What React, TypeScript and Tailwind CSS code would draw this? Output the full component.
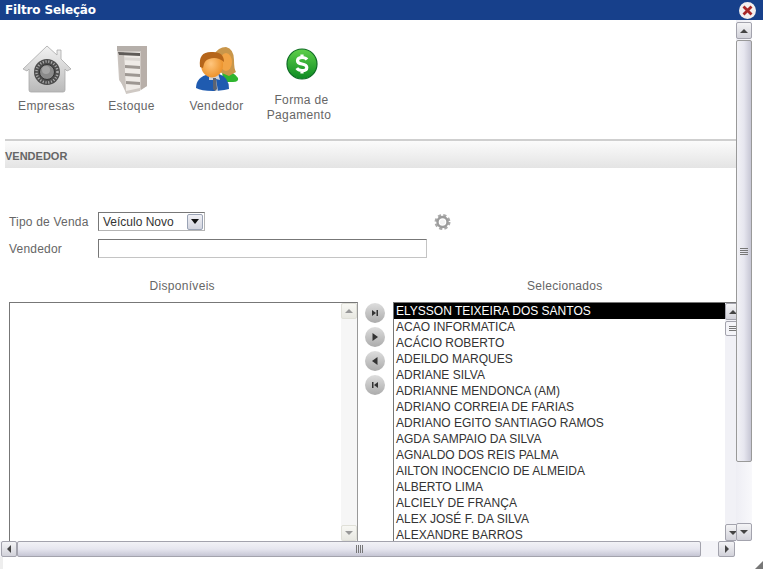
import React from "react";

const names = [
  "ELYSSON TEIXEIRA DOS SANTOS",
  "ACAO INFORMATICA",
  "ACÁCIO ROBERTO",
  "ADEILDO MARQUES",
  "ADRIANE SILVA",
  "ADRIANNE MENDONCA (AM)",
  "ADRIANO CORREIA DE FARIAS",
  "ADRIANO EGITO SANTIAGO RAMOS",
  "AGDA SAMPAIO DA SILVA",
  "AGNALDO DOS REIS PALMA",
  "AILTON INOCENCIO DE ALMEIDA",
  "ALBERTO LIMA",
  "ALCIELY DE FRANÇA",
  "ALEX JOSÉ F. DA SILVA",
  "ALEXANDRE BARROS",
];

const SafeIcon = () => (
  <svg width="50" height="50" viewBox="0 0 50 50">
    <defs>
      <linearGradient id="house" x1="0" y1="0" x2="0" y2="1">
        <stop offset="0" stopColor="#f2f2f2" />
        <stop offset="1" stopColor="#b9b9b9" />
      </linearGradient>
    </defs>
    <path
      d="M25 1 L35 10 V5 H39 V14 L49 24 L45 26 L43 24 V45 Q43 47 41 47 H9 Q7 47 7 45 V24 L5 26 L1 24 Z"
      fill="url(#house)"
      stroke="#a8a8a8"
      strokeWidth="0.8"
    />
    <circle cx="25" cy="27" r="13" fill="#4c4c4c" />
    <circle cx="25" cy="27" r="10.5" fill="none" stroke="#aaa" strokeWidth="2.5" strokeDasharray="1.2 1.6" />
    <circle cx="25" cy="27" r="7.5" fill="#8a8a8a" stroke="#333" />
    <circle cx="24" cy="25" r="4" fill="#a5a5a5" />
  </svg>
);

const CabinetIcon = () => (
  <svg width="32" height="50" viewBox="0 0 32 50">
    <path d="M1 1 H31 V41 L25 44 L24 46 L10 49 L9 43 L3 35 Z" fill="#cfc9c4" />
    <path d="M25 1 H31 V41 L25 45 Z" fill="#b8afa9" />
    <path d="M1 1 H25 V6 H1 Z" fill="#b5afaa" />
    <path d="M8 7 H24 V43 L10 46 Z" fill="#efebe7" />
    <path d="M2 7 L24 8 V11 L3 10 Z" fill="#5f5b58" />
    <path d="M3 12 L24 13 V16 L5 15 Z" fill="#dcd8d4" />
    <path d="M9 20 L24 21 V24 L9 23 Z M9 28 L24 29 V32 L9 31 Z M10 36 L24 37 V40 L10 39 Z" fill="#9d9792" />
    <path d="M2 10 L8 11 L10 48 L4 35 Z" fill="#c8c2bd" />
  </svg>
);

const PeopleIcon = () => (
  <svg width="44" height="46" viewBox="0 0 44 46">
    <defs>
      <radialGradient id="skin" cx="0.45" cy="0.45" r="0.65">
        <stop offset="0" stopColor="#ffc67e" />
        <stop offset="1" stopColor="#e98a1e" />
      </radialGradient>
    </defs>
    <path d="M27 23 Q36 22 43 31 Q44 35 38 35 L28 35 Z" fill="#2fb52f" />
    <path d="M19 8 Q23 0 31 0 Q39 2 39 13 Q39 22 41 25 L34 29 L22 24 Z" fill="#c9964a" />
    <ellipse cx="31" cy="15" rx="6" ry="9" fill="#f2a446" />
    <path d="M1 41 Q1 30 14 27 L24 27 Q34 30 34 42 Q24 44 18 44 Q6 44 1 41 Z" fill="#1f5bb0" />
    <path d="M14 26 L18 30 L23 26 L25 33 L21 32 L23 44 L20 44 L18 33 L14 33 Z" fill="#cfd4dc" />
    <path d="M18 31 L21 31 L22 42 L20 44 L18 42 Z" fill="#5d6472" />
    <ellipse cx="17" cy="18" rx="11" ry="12.5" fill="url(#skin)" />
    <path d="M5 20 Q3 5 16 5 Q29 4 29 15 Q22 9 14 12 Q9 13 8 21 Z" fill="#b5651a" />
  </svg>
);

const MoneyIcon = () => (
  <svg width="32" height="32" viewBox="0 0 32 32">
    <defs>
      <linearGradient id="coin" x1="0" y1="0" x2="0" y2="1">
        <stop offset="0" stopColor="#5fd04a" />
        <stop offset="1" stopColor="#0c8a22" />
      </linearGradient>
    </defs>
    <circle cx="16" cy="16" r="15" fill="url(#coin)" stroke="#0e6b24" strokeWidth="1.2" />
    <path
      d="M21 11.5 Q19.5 9.5 16 9.5 Q11.5 9.5 11.5 12.7 Q11.5 15.2 16 16 Q20.8 16.9 20.8 19.4 Q20.8 22.5 16 22.5 Q12.3 22.5 10.8 20.2 M16 6.5 V9.5 M16 22.5 V25.5"
      fill="none"
      stroke="#fff"
      strokeWidth="3.2"
    />
  </svg>
);

const GearIcon = () => (
  <svg width="17" height="18" viewBox="0 0 17 18">
    <circle cx="8.5" cy="9" r="6.5" fill="none" stroke="#aaa" strokeWidth="3" strokeDasharray="3 2.1" />
    <circle cx="8.5" cy="9" r="5" fill="none" stroke="#9c9c9c" strokeWidth="2.4" />
    <circle cx="8.5" cy="9" r="2.6" fill="#f4f4f4" />
  </svg>
);

const Arrow = ({ dir, color = "#444" }: { dir: "up" | "down" | "left" | "right"; color?: string }) => {
  const points = {
    up: "1,7 9,7 5,3",
    down: "1,3 9,3 5,7",
    left: "7,1 7,9 3,5",
    right: "3,1 3,9 7,5",
  }[dir];
  return (
    <svg width="10" height="10" viewBox="0 0 10 10">
      <polygon points={points} fill={color} />
    </svg>
  );
};

const ScrollButton = ({
  dir,
  className,
  color,
}: {
  dir: "up" | "down" | "left" | "right";
  className: string;
  color?: string;
}) => (
  <div
    className={`flex shrink-0 items-center justify-center rounded-[2px] border border-[#a3a3ad] bg-gradient-to-b from-[#f4f4f6] to-[#d2d2da] ${className}`}
  >
    <Arrow dir={dir} color={color} />
  </div>
);

const MoveButton = ({ children }: { children: React.ReactNode }) => (
  <div className="flex h-5 w-5 items-center justify-center rounded-full bg-gradient-to-b from-[#dedede] to-[#ababab]">
    <svg width="10" height="10" viewBox="0 0 10 10">
      {children}
    </svg>
  </div>
);

const ToolItem = ({ icon, label, top }: { icon: React.ReactNode; label: string; top: string }) => (
  <div className={`flex w-[85px] flex-col items-center text-center leading-[15px] ${top}`}>
    {icon}
    <span className="tracking-[0.35px] text-[#666]">{label}</span>
  </div>
);

export default function App() {
  return (
    <div className="flex h-[569px] w-[763px] flex-col overflow-hidden bg-white text-xs font-['Liberation_Sans',Arial,sans-serif]">
      <div className="relative flex h-5 shrink-0 items-center bg-[#17408b] pl-[5px] font-['DejaVu_Sans',sans-serif] font-bold tracking-[-0.15px] text-white">
        Filtro Seleção
        <div className="absolute right-[7px] top-[2px] flex h-[17px] w-[17px] items-center justify-center rounded-full bg-[#f3eeee]">
          <svg width="11" height="11" viewBox="0 0 11 11">
            <path d="M1.5 1.5 L9.5 9.5 M9.5 1.5 L1.5 9.5" stroke="#a82626" strokeWidth="2.8" />
          </svg>
        </div>
      </div>

      <div className="flex min-h-0 flex-1">
        <div className="flex w-[736px] shrink-0 flex-col overflow-hidden pl-[5px]">
          <div className="flex h-[121px] shrink-0 border-b-2 border-[#cfcfcf]">
            <div className="-ml-px flex">
              <ToolItem top="pt-[25px]" label="Empresas" icon={<div className="mb-[4px]"><SafeIcon /></div>} />
              <ToolItem top="pt-[25px]" label="Estoque" icon={<div className="mb-[4px]"><CabinetIcon /></div>} />
              <ToolItem top="pt-[27px]" label="Vendedor" icon={<div className="mb-[6px]"><PeopleIcon /></div>} />
              <div className="flex w-[85px] flex-col items-center pt-[28px] text-center leading-[15px] tracking-[0.35px] text-[#666]">
                <div className="mb-[13px]"><MoneyIcon /></div>
                <span>Forma de</span>
                <span className="-ml-[5px]">Pagamento</span>
              </div>
            </div>
          </div>

          <div className="flex h-[27px] shrink-0 items-center bg-gradient-to-b from-[#fbfbfb] to-[#e4e4e4] pt-[3px] text-[11px] font-bold text-[#666]">
            VENDEDOR
          </div>

          <div className="flex min-h-0 flex-1 flex-col pl-1 pt-[44px] text-[#666]">
            <div className="flex h-[19px] shrink-0 items-center">
              <span className="w-[89px] tracking-[0.2px]">Tipo de Venda</span>
              <div className="flex h-[19px] w-[107px] items-center justify-between border border-[#b4b4b4] border-l-[#777] border-t-[#777] pl-1 pr-[1px] text-[#333]">
                Veículo Novo
                <div className="flex h-[16px] w-[16px] items-center justify-center rounded-[2px] border border-[#9aa3b5] bg-gradient-to-b from-[#f0f0f5] to-[#d2d4de]">
                  <svg width="8" height="5" viewBox="0 0 8 5">
                    <polygon points="0,0 8,0 4,5" fill="#111" />
                  </svg>
                </div>
              </div>
              <div className="ml-[229px]">
                <GearIcon />
              </div>
            </div>

            <div className="mt-2 flex h-[19px] shrink-0 items-center">
              <span className="w-[89px] tracking-[0.2px]">Vendedor</span>
              <div className="h-[19px] w-[329px] border border-[#c4c4c4] border-l-[#777] border-t-[#777]" />
            </div>

            <div className="mt-[20px] flex h-[24px] shrink-0 tracking-[0.3px]">
              <div className="w-[347px] text-center leading-[16px]">Disponíveis</div>
              <div className="ml-[38px] w-[343px] text-center leading-[16px]">Selecionados</div>
            </div>

            <div className="flex min-h-0 flex-1">
              <div className="flex w-[349px] shrink-0 border border-b-0 border-[#999] border-l-[#777] border-t-[#777]">
                <div className="flex-1" />
                <div className="flex w-[16px] flex-col justify-between bg-[#f6f6f6]">
                  <ScrollButton dir="up" color="#999" className="h-4 w-4 border-[#e0e0d8] from-[#f8f8f4] to-[#e8e8e2]" />
                  <ScrollButton dir="down" color="#999" className="h-4 w-4 border-[#e0e0d8] from-[#f8f8f4] to-[#e8e8e2]" />
                </div>
              </div>

              <div className="flex w-[35px] shrink-0 flex-col items-center gap-1 pt-[1px] pr-[2px]">
                <MoveButton>
                  <polygon points="2,2 2,8 6,5" fill="#333" />
                  <rect x="6.5" y="2" width="1.5" height="6" fill="#333" />
                </MoveButton>
                <MoveButton>
                  <polygon points="2.5,1 2.5,9 8,5" fill="#333" />
                </MoveButton>
                <MoveButton>
                  <polygon points="7.5,1 7.5,9 2,5" fill="#333" />
                </MoveButton>
                <MoveButton>
                  <polygon points="8,2 8,8 4,5" fill="#333" />
                  <rect x="2" y="2" width="1.5" height="6" fill="#333" />
                </MoveButton>
              </div>

              <div className="flex min-w-0 flex-1 border-l border-t border-[#777]">
                <div className="min-w-0 flex-1 overflow-hidden leading-[16px] text-[#333]">
                  {names.map((name, i) => (
                    <div
                      key={name}
                      className={`h-4 shrink-0 whitespace-nowrap pl-[2px] ${i === 0 ? "bg-black text-white" : ""}`}
                    >
                      {name}
                    </div>
                  ))}
                </div>
                {/* only the left part of this scrollbar shows, the panel cuts the rest */}
                <div className="w-[11px] shrink-0 overflow-hidden bg-[#f1f1f6]">
                  <div className="flex h-full w-4 flex-col">
                    <ScrollButton dir="up" className="h-[17px] w-4" />
                    <div className="mt-[1px] flex h-[15px] w-4 flex-col items-center justify-center gap-[1px] rounded-[2px] border border-[#a3a3ad] bg-[#f4f4f8]">
                      <div className="h-px w-2 bg-[#777]" />
                      <div className="h-px w-2 bg-[#777]" />
                      <div className="h-px w-2 bg-[#777]" />
                    </div>
                    <ScrollButton dir="down" className="mt-auto h-[17px] w-4" />
                  </div>
                </div>
              </div>
            </div>
          </div>
        </div>

        <div className="flex w-[16px] shrink-0 flex-col bg-gradient-to-r from-[#eeeef4] to-[#f8f8fb] pt-[2px]">
          <ScrollButton dir="up" className="h-[17px] w-[16px]" />
          <div className="mt-[1px] flex h-[422px] w-[16px] flex-col items-center justify-center rounded-[2px] border border-[#999] bg-gradient-to-r from-[#f2f2f6] via-[#e6e6ef] to-[#c6c6d4]">
            <div className="flex flex-col gap-[1px]">
              <div className="h-px w-2 bg-[#777]" />
              <div className="h-px w-2 bg-[#777]" />
              <div className="h-px w-2 bg-[#777]" />
              <div className="h-px w-2 bg-[#777]" />
            </div>
          </div>
          <ScrollButton dir="down" className="mt-auto h-[18px] w-[16px]" />
        </div>
      </div>

      <div className="flex h-4 w-[735px] shrink-0 bg-[#f4f4f8]">
        <ScrollButton dir="left" className="ml-[1px] h-4 w-4" />
        <div className="flex h-4 w-[684px] items-center justify-center rounded-[2px] border border-[#a3a3ad] bg-gradient-to-b from-[#f2f2f6] via-[#e6e6ef] to-[#c6c6d4]">
          <div className="flex gap-[1px]">
            <div className="h-2 w-px bg-[#777]" />
            <div className="h-2 w-px bg-[#777]" />
            <div className="h-2 w-px bg-[#777]" />
            <div className="h-2 w-px bg-[#777]" />
          </div>
        </div>
        <ScrollButton dir="right" className="ml-auto h-4 w-[17px]" />
      </div>

      <div className="flex h-3 shrink-0 items-end justify-between">
        <div className="h-3 w-[3px] bg-[#eeeeee]" />
        <svg width="8" height="8" viewBox="0 0 8 8">
          <path d="M8 0 L0 8 H8 Z" fill="#777" />
        </svg>
      </div>
    </div>
  );
}
